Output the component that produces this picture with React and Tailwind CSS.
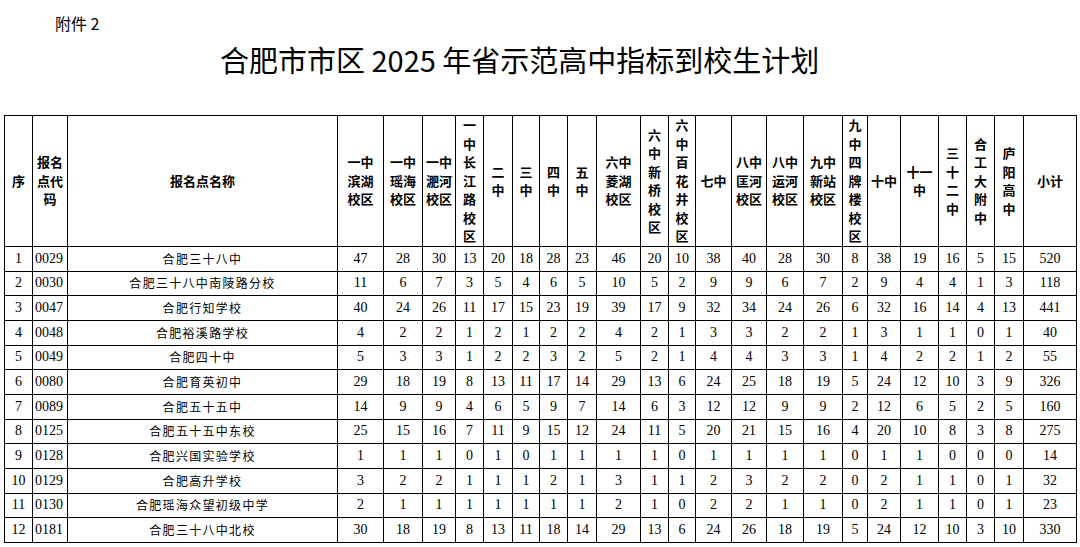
const columns = [
  { w: 28, head: ["序"] },
  { w: 35, head: ["报名", "点代", "码"] },
  { w: 270, head: ["报名点名称"] },
  { w: 46, head: ["一中", "滨湖", "校区"] },
  { w: 39, head: ["一中", "瑶海", "校区"] },
  { w: 33, head: ["一中", "淝河", "校区"] },
  { w: 28, head: ["一", "中", "长", "江", "路", "校", "区"] },
  { w: 29, head: ["二", "中"] },
  { w: 27, head: ["三", "中"] },
  { w: 28, head: ["四", "中"] },
  { w: 29, head: ["五", "中"] },
  { w: 44, head: ["六中", "菱湖", "校区"] },
  { w: 28, head: ["六", "中", "新", "桥", "校", "区"] },
  { w: 27, head: ["六", "中", "百", "花", "井", "校", "区"] },
  { w: 36, head: ["七中"] },
  { w: 35, head: ["八中", "匡河", "校区"] },
  { w: 37, head: ["八中", "运河", "校区"] },
  { w: 39, head: ["九中", "新站", "校区"] },
  { w: 25, head: ["九", "中", "四", "牌", "楼", "校", "区"] },
  { w: 33, head: ["十中"] },
  { w: 38, head: ["十一", "中"] },
  { w: 28, head: ["三", "十", "二", "中"] },
  { w: 28, head: ["合", "工", "大", "附", "中"] },
  { w: 29, head: ["庐", "阳", "高", "中"] },
  { w: 53, head: ["小计"] },
];

const rows = [
  ["0029", "合肥三十八中", "47 28 30 13 20 18 28 23 46 20 10 38 40 28 30 8 38 19 16 5 15 520"],
  ["0030", "合肥三十八中南陵路分校", "11 6 7 3 5 4 6 5 10 5 2 9 9 6 7 2 9 4 4 1 3 118"],
  ["0047", "合肥行知学校", "40 24 26 11 17 15 23 19 39 17 9 32 34 24 26 6 32 16 14 4 13 441"],
  ["0048", "合肥裕溪路学校", "4 2 2 1 2 1 2 2 4 2 1 3 3 2 2 1 3 1 1 0 1 40"],
  ["0049", "合肥四十中", "5 3 3 1 2 2 3 2 5 2 1 4 4 3 3 1 4 2 2 1 2 55"],
  ["0080", "合肥育英初中", "29 18 19 8 13 11 17 14 29 13 6 24 25 18 19 5 24 12 10 3 9 326"],
  ["0089", "合肥五十五中", "14 9 9 4 6 5 9 7 14 6 3 12 12 9 9 2 12 6 5 2 5 160"],
  ["0125", "合肥五十五中东校", "25 15 16 7 11 9 15 12 24 11 5 20 21 15 16 4 20 10 8 3 8 275"],
  ["0128", "合肥兴国实验学校", "1 1 1 0 1 0 1 1 1 1 0 1 1 1 1 0 1 1 0 0 0 14"],
  ["0129", "合肥高升学校", "3 2 2 1 1 1 2 1 3 1 1 2 3 2 2 0 2 1 1 0 1 32"],
  ["0130", "合肥瑶海众望初级中学", "2 1 1 1 1 1 1 1 2 1 0 2 2 1 1 0 2 1 1 0 1 23"],
  ["0181", "合肥三十八中北校", "30 18 19 8 13 11 18 14 29 13 6 24 26 18 19 5 24 12 10 3 10 330"],
];

const sans = "font-['Noto_Sans_CJK_SC','Noto_Sans',sans-serif]";
const serif = "font-['Liberation_Serif','Noto_Sans_CJK_SC',serif]";

export default function App() {
  return (
    <div className="w-[1080px] h-[547px] bg-white text-black overflow-hidden">
      {/* Attachment label */}
      <div className={`pt-[11px] pl-[55px] text-[16px] leading-[24px] ${sans}`}>
        附件 2
      </div>

      {/* Title */}
      <h1 className={`mt-[4px] pl-[220px] text-[29px] leading-[40px] font-normal ${sans}`}>
        合肥市市区 2025 年省示范高中指标到校生计划
      </h1>

      {/* Table */}
      <table className="mt-[36px] ml-[4px] w-[1072px] table-fixed border-collapse border border-black">
        <colgroup>
          {columns.map((c, i) => (
            <col key={i} style={{ width: c.w }} />
          ))}
        </colgroup>
        <thead>
          <tr className="h-[131px]">
            {columns.map((c, i) => (
              <th
                key={i}
                className={`border border-black p-0 text-center align-middle text-[13px] leading-[18.5px] font-bold ${sans}`}
              >
                {c.head.map((line, j) => (
                  <div key={j}>{line}</div>
                ))}
              </th>
            ))}
          </tr>
        </thead>
        <tbody>
          {rows.map(([code, name, nums], i) => (
            <tr key={code} className="h-[24.67px]">
              <td className={`border border-black p-0 text-center text-[14px] leading-[20px] ${serif}`}>
                {i + 1}
              </td>
              <td className={`border border-black p-0 pl-[2px] text-left text-[14px] leading-[20px] ${serif}`}>
                {code}
              </td>
              <td className={`border border-black p-0 text-center text-[12px] leading-[20px] tracking-[1.3px] ${sans}`}>
                {name}
              </td>
              {nums.split(" ").map((n, j) => (
                <td
                  key={j}
                  className={`border border-black p-0 text-center text-[14px] leading-[20px] ${serif}`}
                >
                  {n}
                </td>
              ))}
            </tr>
          ))}
        </tbody>
      </table>
    </div>
  );
}
